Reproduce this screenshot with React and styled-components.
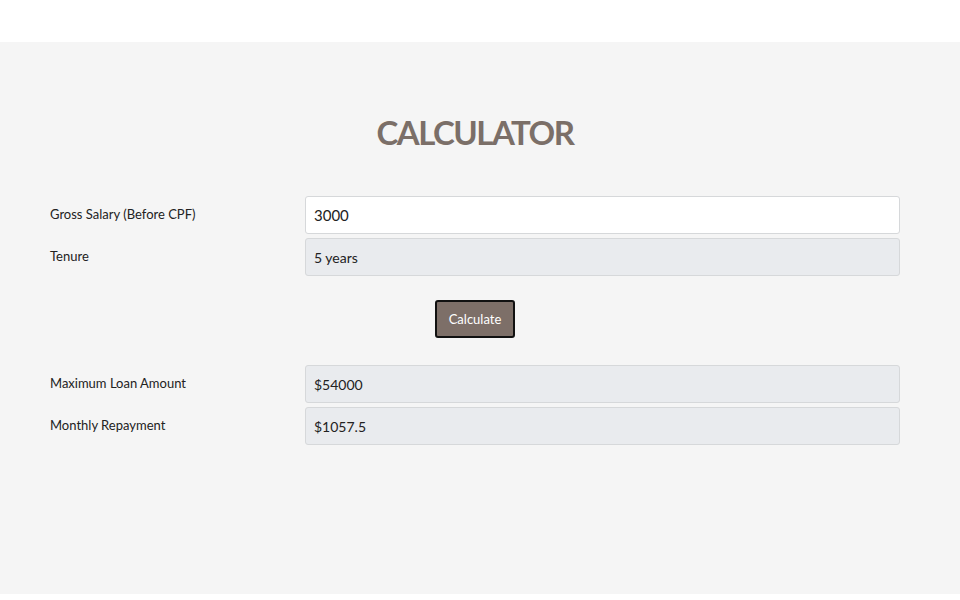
import styled, { createGlobalStyle } from "styled-components";

const GlobalStyle = createGlobalStyle`
  html, body {
    margin: 0;
    padding: 0;
    background: #ffffff;
    font-family: Lato, "Open Sans", sans-serif;
    color: #212529;
  }
`;

const rows = [
  { label: "Gross Salary (Before CPF)", value: "3000", readOnly: false },
  { label: "Tenure", value: "5 years", readOnly: true },
];

const results = [
  { label: "Maximum Loan Amount", value: "$54000" },
  { label: "Monthly Repayment", value: "$1057.5" },
];

export default function App() {
  return (
    <>
      <GlobalStyle />
      <Wrap>
        <Section>
          <Container>
            <Title>CALCULATOR</Title>
            <Group>
              {rows.map((r) => (
                <Row key={r.label}>
                  <Label>{r.label}</Label>
                  <Field $readOnly={r.readOnly}>{r.value}</Field>
                </Row>
              ))}
            </Group>
            <ButtonRow>
              <Button type="button">Calculate</Button>
            </ButtonRow>
            <Group>
              {results.map((r) => (
                <Row key={r.label}>
                  <Label>{r.label}</Label>
                  <Field $readOnly>{r.value}</Field>
                </Row>
              ))}
            </Group>
          </Container>
        </Section>
      </Wrap>
    </>
  );
}

const Wrap = styled.div`
  padding-top: 42px;
  min-height: 600px;
  box-sizing: border-box;
`;

const Section = styled.section`
  background: #f5f5f5;
  height: 552px;
`;

const Container = styled.div`
  width: 850px;
  margin-left: 50px;
  padding-top: 70px;
`;

const Title = styled.h1`
  margin: 0 0 44px;
  text-align: center;
  font-size: 33px;
  font-weight: 700;
  letter-spacing: -1.5px;
  line-height: 40px;
  color: #7b6f68;
`;

const Group = styled.div`
  display: flex;
  flex-direction: column;
  gap: 4px;
`;

const Row = styled.div`
  display: grid;
  grid-template-columns: 255px 1fr;
  align-items: center;
`;

const Label = styled.div`
  font-size: 13px;
  color: #222;
  padding-bottom: 2px;
`;

const Field = styled.div`
  height: 38px;
  box-sizing: border-box;
  display: flex;
  align-items: center;
  padding: 0 8px;
  font-size: ${(p) => (p.$readOnly ? "14px" : "15px")};
  background: ${(p) => (p.$readOnly ? "#e9ebee" : "#ffffff")};
  border: 1px solid #d6d8da;
  border-radius: 3px;
  color: #222;
`;

const ButtonRow = styled.div`
  display: flex;
  justify-content: center;
  padding: 24px 0 27px;
`;

const Button = styled.button`
  width: 80px;
  height: 38px;
  background: #7d6f68;
  color: #fff;
  border: 2px solid #111;
  border-radius: 3px;
  font-family: Lato, "Open Sans", sans-serif;
  font-size: 13px;
  cursor: pointer;
`;
